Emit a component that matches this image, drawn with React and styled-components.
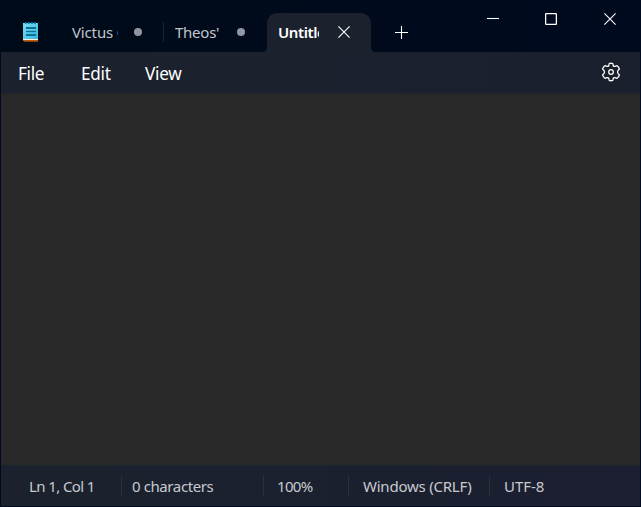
import React from 'react';
import styled, { createGlobalStyle, css } from 'styled-components';

const GlobalStyle = createGlobalStyle`
  *, *::before, *::after { box-sizing: border-box; }
  html, body { margin: 0; overflow: hidden; background: #000b1f; }
`;

const Window = styled.div`
  width: 641px;
  height: 507px;
  display: grid;
  grid-template-rows: 52px 42px 1fr 42px;
  background: #000b22;
  color: #fff;
  font-family: 'Noto Sans', 'Open Sans', sans-serif;
  user-select: none;
`;

const TitleBar = styled.header`
  display: flex;
  align-items: flex-end;
  background: linear-gradient(90deg, #000b19, #000a1f);
`;

const AppIcon = styled.svg`
  width: 16px;
  height: 20px;
  flex: none;
  margin: 0 23px 10px;
`;

const Tab = styled.div`
  position: relative;
  display: flex;
  align-items: center;
  flex: none;
  height: 39px;
  width: ${(p) => p.$width}px;
  padding: 0 0 1px ${(p) => p.$inset}px;
  color: #c3c7cd;
  ${(p) => p.$divided && css`
    &::before {
      content: '';
      position: absolute;
      left: 0;
      top: 9px;
      width: 1px;
      height: 20px;
      background: #1a2431;
    }
  `}
  ${(p) => p.$active && css`
    color: #fff;
    font-weight: 600;
    background: #1b212d;
    border-radius: 10px 10px 0 0;
    &::before, &::after {
      content: '';
      position: absolute;
      bottom: 0;
      width: 4px;
      height: 4px;
    }
    &::before { left: -4px; background: radial-gradient(circle at 0 0, transparent 3.5px, #1b212d 4px); }
    &::after { right: -4px; background: radial-gradient(circle at 100% 0, transparent 3.5px, #1b212d 4px); }
  `}
`;

const TabLabel = styled.span`
  width: ${(p) => p.$width}px;
  overflow: hidden;
  white-space: nowrap;
  font-size: 15px;
  line-height: 20px;
  letter-spacing: ${(p) => p.$spacing || 0}px;
`;

const UnsavedDot = styled.span`
  width: 8px;
  height: 8px;
  margin-left: ${(p) => p.$gap}px;
  border-radius: 50%;
  background: #9396a0;
`;

const Glyph = styled.svg`
  display: block;
  flex: none;
  width: ${(p) => p.$size}px;
  height: ${(p) => p.$size}px;
  fill: none;
  stroke: #fff;
  stroke-width: ${(p) => p.$weight || 1.1};
`;

const TabClose = styled.div`
  margin: 0 0 1px 19px;
`;

const NewTab = styled.div`
  margin: 0 0 13px 24px;
`;

const Captions = styled.div`
  display: grid;
  grid-template-columns: 58px 59px 12px;
  align-self: flex-start;
  margin: 13px 25px 0 auto;
`;

const MenuBar = styled.nav`
  display: flex;
  align-items: center;
  margin: 0 1px;
  padding: 0 19px 0 17px;
  background: linear-gradient(90deg, #1b222d, #1b202e);
  border-bottom: 1px solid #212429;
`;

const MenuItem = styled.span`
  width: ${(p) => p.$width}px;
  font-size: 17.2px;
  line-height: 24px;
  letter-spacing: ${(p) => p.$spacing || 0}px;
  padding-top: 3px;
`;

const Settings = styled.div`
  margin: 0 0 2px auto;
`;

const Editor = styled.main`
  margin: 0 1px;
  background: #282828;
`;

const StatusBar = styled.footer`
  display: flex;
  margin: 0 1px 1px;
  padding-top: 10px;
  border-top: 1px solid #1e242e;
  background: linear-gradient(90deg, #1b222d, #1b1f31);
`;

const StatusItem = styled.span`
  width: ${(p) => p.$width}px;
  height: 20px;
  padding-left: ${(p) => p.$inset}px;
  border-left: ${(p) => (p.$first ? 0 : 1)}px solid #2b313c;
  color: #c8cacf;
  font-size: 15px;
  line-height: 20px;
  white-space: nowrap;
  letter-spacing: ${(p) => p.$spacing || 0}px;
`;

const CloseGlyph = ({ size }) => (
  <Glyph $size={size} viewBox="0 0 12 12">
    <path d="M.4.4 11.6 11.6M11.6.4.4 11.6" />
  </Glyph>
);

const NotepadIcon = () => (
  <AppIcon viewBox="0 0 16 20">
    <defs>
      <linearGradient id="page" x1="0" y1="0" x2="1" y2="1">
        <stop offset="0" stopColor="#7bdcf2" />
        <stop offset="1" stopColor="#35b7df" />
      </linearGradient>
    </defs>
    <path fill="url(#page)" d="M0 1h15v17H0z" />
    <path stroke="#087aa3" strokeWidth="1.6" d="M3 0v2M6 0v2M9 0v2M12 0v2" />
    <path stroke="#087299" strokeWidth="2" d="M3 6h10M3 13h10" />
    <path stroke="#087299" strokeWidth="1.4" d="M3 9.5h10" />
    <path fill="#f6efe4" d="M0 17h15v1H0z" />
    <path fill="#b85c12" d="M0 18h15v1H0z" />
    <path fill="#8a3e0c" d="M1 19h14v1H1z" />
  </AppIcon>
);

const GearIcon = () => (
  <Glyph $size={20} $weight={1.25} viewBox="0 0 20 20">
    <path
      strokeLinejoin="round"
      d="M8.2 1.5Q10 1 11.8 1.5L12.2 3.6Q12.7 4.6 13.9 4.4L16.1 3.7Q17.8 5 18.4 7L16.9 8.6Q16.1 10 16.9 11.4L18.4 13Q17.8 15 16.1 16.3L13.9 15.6Q12.7 15.4 12.2 16.4L11.8 18.5Q10 19 8.2 18.5L7.8 16.4Q7.3 15.4 6.1 15.6L3.9 16.3Q2.2 15 1.6 13L3.1 11.4Q3.9 10 3.1 8.6L1.6 7Q2.2 5 3.9 3.7L6.1 4.4Q7.3 4.6 7.8 3.6Z"
    />
    <circle cx="10" cy="10" r="2.3" />
  </Glyph>
);

export default function App() {
  return (
    <>
      <GlobalStyle />
      <Window>
        <TitleBar>
          <NotepadIcon />
          <Tab $width={101} $inset={10}>
            <TabLabel $width={46} $spacing={-0.15}>Victus G</TabLabel>
            <UnsavedDot $gap={16} />
          </Tab>
          <Tab $width={104} $inset={12} $divided>
            <TabLabel $width={46} $spacing={-0.25}>Theos'</TabLabel>
            <UnsavedDot $gap={16} />
          </Tab>
          <Tab $width={104} $inset={11} $active>
            <TabLabel $width={41} $spacing={-0.4}>Untitled</TabLabel>
            <TabClose><CloseGlyph size={12} /></TabClose>
          </Tab>
          <NewTab>
            <Glyph $size={13} viewBox="0 0 13 13">
              <path d="M0 6.5h13M6.5 0v13" />
            </Glyph>
          </NewTab>
          <Captions>
            <Glyph $size={12} viewBox="0 0 12 12">
              <path d="M0 5.5h12" />
            </Glyph>
            <Glyph $size={12} $weight={1.3} viewBox="0 0 12 12">
              <rect x=".6" y=".6" width="10.8" height="10.8" rx="1" />
            </Glyph>
            <CloseGlyph size={12} />
          </Captions>
        </TitleBar>
        <MenuBar>
          <MenuItem $width={63} $spacing={-0.35}>File</MenuItem>
          <MenuItem $width={64} $spacing={-0.3}>Edit</MenuItem>
          <MenuItem $width={50} $spacing={-0.3}>View</MenuItem>
          <Settings><GearIcon /></Settings>
        </MenuBar>
        <Editor />
        <StatusBar>
          <StatusItem $first $width={120} $inset={28} $spacing={-0.6}>Ln 1, Col 1</StatusItem>
          <StatusItem $width={142} $inset={10} $spacing={-0.4}>0 characters</StatusItem>
          <StatusItem $width={85} $inset={13} $spacing={-0.7}>100%</StatusItem>
          <StatusItem $width={141} $inset={14} $spacing={-0.23}>Windows (CRLF)</StatusItem>
          <StatusItem $width={140} $inset={14} $spacing={-0.05}>UTF-8</StatusItem>
        </StatusBar>
      </Window>
    </>
  );
}
